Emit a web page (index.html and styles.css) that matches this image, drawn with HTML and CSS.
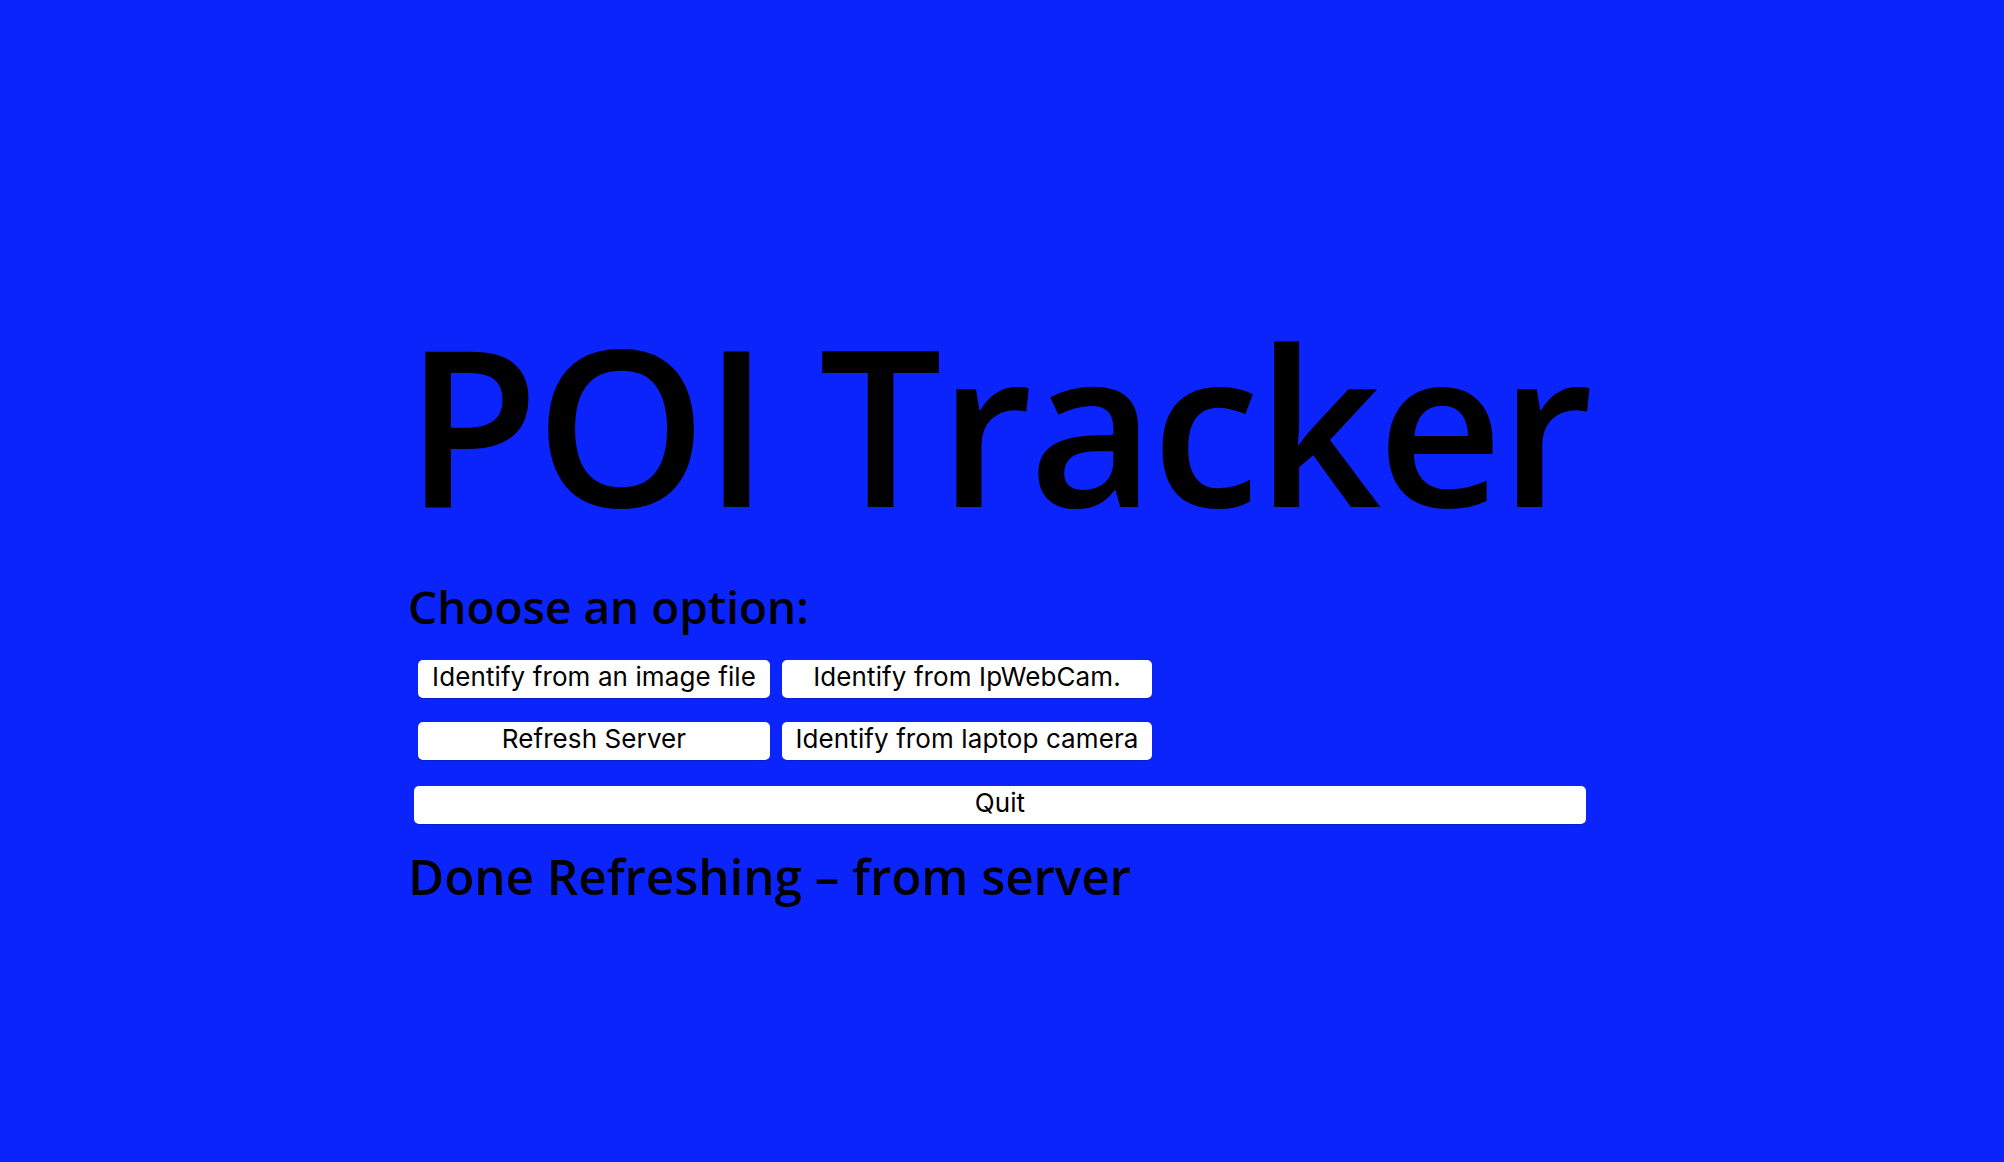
FILE: index.html
```html
<!DOCTYPE html>
<html lang="en">
<head>
    <meta charset="UTF-8">
    <meta name="viewport" content="width=device-width, initial-scale=1.0">
    <title>POI Tracker</title>
    <link rel="stylesheet" href="styles.css">
</head>
<body>
    <main class="panel">
        <h1 class="title">POI Tracker</h1>
        <p class="prompt">Choose an option:</p>
        <div class="options">
            <button class="btn">Identify from an image file</button>
            <button class="btn">Identify from IpWebCam.</button>
            <button class="btn">Refresh Server</button>
            <button class="btn">Identify from laptop camera</button>
        </div>
        <button class="btn btn-quit">Quit</button>
        <p class="status">Done Refreshing – from server</p>
    </main>
</body>
</html>
```

FILE: styles.css
```css
/* Global Styles */
* {
    box-sizing: border-box;
    margin: 0;
    padding: 0;
}

body {
    display: flex;
    justify-content: center;
    height: 1162px;
    overflow: hidden;
    background-color: #0b24fb;
    color: #000;
    font-family: "Comic Sans MS", "Open Sans", sans-serif;
}

.panel {
    width: 1184px;
    margin-left: -4px;
    padding-top: 316px;
}

.title {
    margin-left: -3px;
    font-size: 218px;
    font-weight: 600;
    letter-spacing: -3.7px;
    line-height: 214px;
    white-space: nowrap;
}

.prompt {
    margin-top: 44px;
    font-size: 46px;
    font-weight: 600;
    line-height: 64px;
}

/* Buttons */
.options {
    display: grid;
    grid-template-columns: 352px 370px;
    gap: 24px 12px;
    margin: 22px 0 0 10px;
}

.btn {
    height: 38px;
    border: none;
    border-radius: 5px;
    background-color: #fff;
    box-shadow: 0 1px 1px rgba(0, 0, 0, 0.2);
    color: #000;
    font-family: Inter, "Noto Sans", sans-serif;
    font-size: 26px;
    letter-spacing: 0.1px;
    line-height: 34px;
    padding-bottom: 4px;
}

.btn-quit {
    display: block;
    width: 1172px;
    margin: 26px 0 0 6px;
}

.status {
    margin-top: 15px;
    font-size: 49.3px;
    font-weight: 600;
    line-height: 74px;
    white-space: nowrap;
}
```
